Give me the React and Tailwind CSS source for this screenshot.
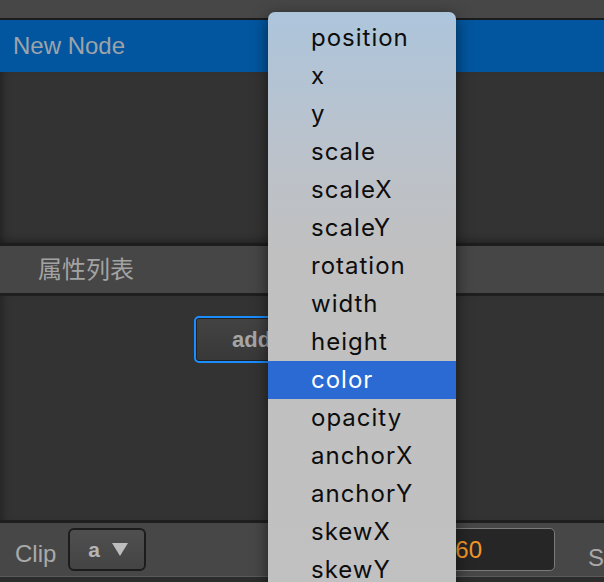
import React from "react";

const items = [
    "position", "x", "y", "scale", "scaleX", "scaleY", "rotation", "width",
    "height", "color", "opacity", "anchorX", "anchorY", "skewX", "skewY", "trigger",
];

const sans = { fontFamily: '"Liberation Sans", Arial, "Noto Sans CJK SC", sans-serif' };
const menuFont = { fontFamily: 'Inter, "Liberation Sans", Arial, sans-serif' };

function PropMenu() {
    return (
        <div
            className="absolute left-[268px] top-[12px] w-[188px] rounded-t-[7px] pt-[7px] pb-[20px] bg-[linear-gradient(to_bottom,#adc5dc_0px,#bcc2ca_150px,#c0c0c0_240px,#c1c1c1_100%)] shadow-[0_4px_16px_rgba(0,0,0,0.55)]"
            style={menuFont}
        >
            {items.map((name) => (
                <div
                    key={name}
                    className={
                        name === "color"
                            ? "h-[38px] pl-[43px] flex items-center bg-[#2a6ad2] text-white text-[24px] tracking-[1px]"
                            : "h-[38px] pl-[43px] flex items-center text-[#0d0d0d] text-[24px] tracking-[1px]"
                    }
                >
                    {name}
                </div>
            ))}
        </div>
    );
}

export default function App() {
    return (
        <div className="relative w-[604px] h-[582px] overflow-hidden bg-[#2b2b2b]" style={sans}>
            {/* toolbar strip */}
            <div className="h-[18px] bg-[#474747]" />
            <div className="h-[2px] bg-[#1b1b1b]" />

            {/* node tree */}
            <div className="h-[52px] bg-[#02569f] flex items-center pl-[13px] text-[24px] text-[#9ea3a9]">
                New Node
            </div>
            <div className="h-[171px] bg-[#333] shadow-[inset_8px_0_10px_-6px_rgba(0,0,0,0.35),inset_0_-8px_10px_-6px_rgba(0,0,0,0.3)]" />
            <div className="h-[3px] bg-[#1d1d1d]" />

            {/* property list header */}
            <div className="h-[47px] bg-[#464646] flex items-center pl-[38px] text-[24px] text-[#a3a3a3]">
                属性列表
            </div>
            <div className="h-[3px] bg-[#1f1f1f]" />

            {/* property panel */}
            <div className="h-[224px] bg-[#333] pt-[20px] pl-[194px] shadow-[inset_8px_0_10px_-6px_rgba(0,0,0,0.35)]">
                <div className="w-[230px] h-[47px] rounded-[5px] border-2 border-[#1a8dff] bg-[linear-gradient(to_bottom,#434343,#383838)] shadow-[inset_0_0_0_1px_#222] flex items-center pl-[36px] text-[22px] font-bold text-[#a6a6a6]">
                    add property
                </div>
            </div>
            <div className="h-[3px] bg-[#1e1e1e]" />

            {/* bottom timeline bar */}
            <div className="h-[53px] bg-[#474747] flex items-center pl-[15px] text-[24px] text-[#a9a9a9]">
                <span className="mt-[8px]">Clip</span>
                <div className="ml-[12px] w-[78px] h-[43px] rounded-[6px] border-2 border-[#1c1c1c] bg-[linear-gradient(to_bottom,#4f4f4f,#444)] flex items-center pl-[18px] gap-[12px]">
                    <span className="text-[21px] font-bold text-[#b5b5b5]">a</span>
                    <svg width="16" height="13" viewBox="0 0 16 13">
                        <path d="M0 0 H16 L8 13 Z" fill="#bdbdbd" />
                    </svg>
                </div>
                <div className="ml-auto mr-[49px] w-[140px] h-[43px] rounded-[5px] border-[1.5px] border-[#7a7a7a] bg-[#262626] flex items-center pl-[26px] text-[24px] text-[#f2962a]">
                    360
                </div>
            </div>
            <div className="absolute left-[588px] top-[540px] text-[24px] text-[#a9a9a9]">S</div>
            <div className="h-[1px] bg-[#5a5a5a]" />
            <div className="h-[5px] bg-[#2c2c2c]" />

            <PropMenu />
        </div>
    );
}
